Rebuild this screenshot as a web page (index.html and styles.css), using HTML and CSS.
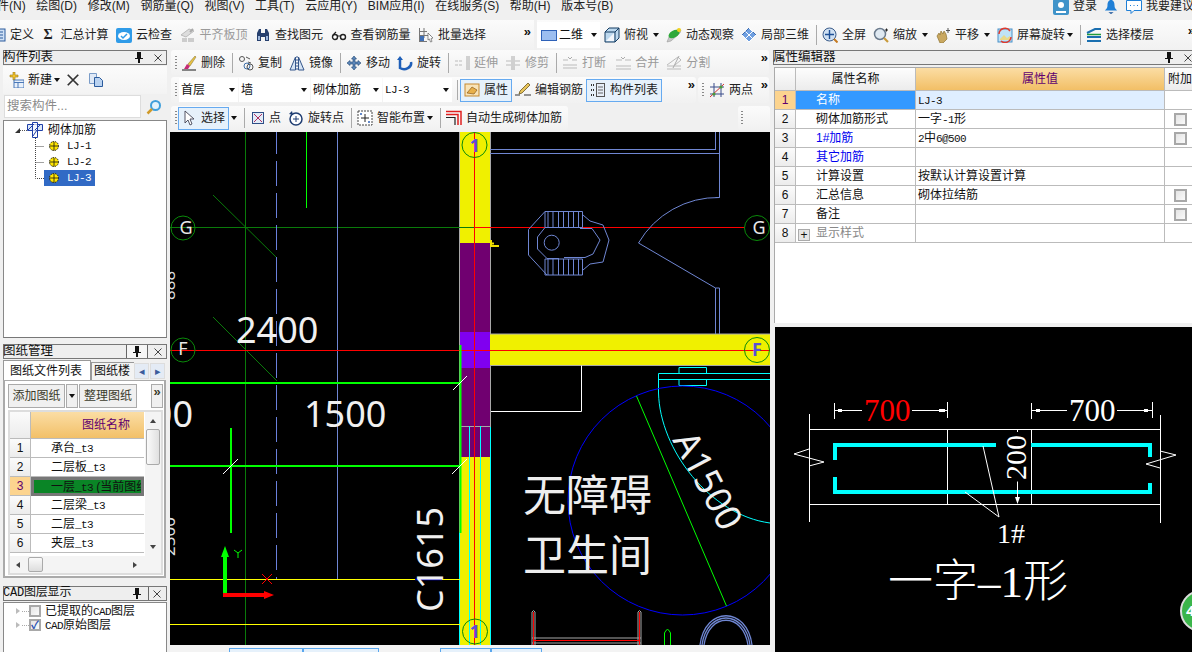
FILE: index.html
```html
<!DOCTYPE html>
<html lang="zh-CN">
<head>
<meta charset="utf-8">
<title>钢筋算量</title>
<link rel="stylesheet" href="styles.css">
</head>
<body>
<svg class="sprite" xmlns="http://www.w3.org/2000/svg">
  <symbol id="i-def" viewBox="0 0 16 16"><rect x="1" y="2" width="14" height="12" fill="#cfe0f5" stroke="#2a5a9c"/><path d="M3 5h10M3 8h10M3 11h10" stroke="#2a5a9c"/></symbol>
  <symbol id="i-cloud" viewBox="0 0 16 16"><rect x="0" y="1" width="16" height="15" rx="2" fill="#2f9be8"/><ellipse cx="8" cy="9" rx="6" ry="4" fill="#fff"/><path d="M5 9l2 2 4-4" fill="none" stroke="#2f9be8" stroke-width="1.5"/></symbol>
  <symbol id="i-align" viewBox="0 0 16 16"><path d="M1 8l8-6 5 2-8 6z" fill="#ddd" stroke="#bbb"/><path d="M2 11h5v4H2zM8 11h6v4H8z" fill="#ccc"/><path d="M10 5l3-3" stroke="#aaa" stroke-width="2"/></symbol>
  <symbol id="i-bino" viewBox="0 0 16 16"><path d="M2 14V6l2-4h2v12zM14 14V6l-2-4h-2v12z" fill="#27406e"/><path d="M6 6h4v4H6z" fill="#27406e"/><path d="M3 9h2v4H3zM11 9h2v4h-2z" fill="#9db7dc"/></symbol>
  <symbol id="i-glass" viewBox="0 0 16 16"><circle cx="4" cy="10" r="2.5" fill="#fff" stroke="#222" stroke-width="1.4"/><circle cx="12" cy="10" r="2.5" fill="#fff" stroke="#222" stroke-width="1.4"/><path d="M6 9h4M2 8l3-3" stroke="#222" stroke-width="1.2" fill="none"/></symbol>
  <symbol id="i-batch" viewBox="0 0 16 16"><path d="M1.500 1v14M6 1v10M1 4.500h8M1 8.500h12M1 14.500h8" stroke="#777" fill="none"/><rect x="2" y="9" width="4" height="5" fill="#3f6fb5"/><path d="M10 6l5 5-2 .5 1 3-1.500.5-1-3-1.500 1z" fill="#fff" stroke="#666" stroke-width=".7"/></symbol>
  <symbol id="i-2d" viewBox="0 0 16 16"><rect x=".5" y="3.500" width="15" height="10" fill="#9cbef0" stroke="#2f62b8"/></symbol>
  <symbol id="i-cube" viewBox="0 0 16 16"><path d="M1 5l4-4h10v10l-4 4H1z" fill="#bcd8ee" stroke="#133a60"/><path d="M1 5h10v10M11 5l4-4" fill="none" stroke="#133a60"/><path d="M2 14l8-8v8z" fill="#fff" opacity=".8"/></symbol>
  <symbol id="i-orbit" viewBox="0 0 16 16"><path d="M1 15l2-5 9-8 3 1-1 3-9 8z" fill="#c8c8c8" stroke="#999" stroke-width=".6"/><ellipse cx="8" cy="7" rx="6" ry="3.500" fill="#2fa83a" transform="rotate(-30 8 7)"/><circle cx="13" cy="3" r="2" fill="#f1d21c"/></symbol>
  <symbol id="i-l3d" viewBox="0 0 16 16"><path d="M1 8l7-7 7 7-7 7z" fill="#6f9fe0" stroke="#3c6cb0"/><path d="M4.500 4.500l7 7M8 1l4 4M1 8l7 7M11.500 4.500l-7 7M15 8l-7 7" stroke="#fff" fill="none"/></symbol>
  <symbol id="i-full" viewBox="0 0 16 16"><circle cx="7.500" cy="7.500" r="6.500" fill="#cfe0f2" stroke="#3b5c8a"/><path d="M7.500 3v9M3 7.500h9" stroke="#1d4f96" stroke-width="1.400"/><path d="M12 12l3.500 3.500" stroke="#c47a22" stroke-width="2"/></symbol>
  <symbol id="i-zoom" viewBox="0 0 16 16"><circle cx="7" cy="7" r="5.500" fill="#dfe9f2" stroke="#6a7a8c" stroke-width="1.500"/><path d="M11 11l4 4" stroke="#c89a3a" stroke-width="2.200"/><path d="M12 3h3M13.500 1.500v3" stroke="#222"/></symbol>
  <symbol id="i-pan" viewBox="0 0 16 16"><path d="M2 9l2-3 1 2 1-4 2 3 1-3 2 3 1 5-4 4H5z" fill="#c9a860" stroke="#8f7434" stroke-width=".7"/><path d="M13 1v5M11 3.500h4" stroke="#555"/></symbol>
  <symbol id="i-srot" viewBox="0 0 16 16"><rect x="1" y="2" width="14" height="13" fill="#bfe3f7" stroke="#4a90c8"/><path d="M3 12l4-4 3 3 3-2v4H3z" fill="#e8d98a"/><path d="M2 7a6 6 0 0 1 11-3M14 10a6 6 0 0 1-10 4" fill="none" stroke="#e03a2e" stroke-width="1.500"/></symbol>
  <symbol id="i-layer" viewBox="0 0 16 16"><path d="M1 6l8-4h6M1 10h14M1 14h14" fill="none" stroke="#1a6fb0" stroke-width="2"/><path d="M1 7.500h14" stroke="#1f9a3a" stroke-width="1.500"/></symbol>
  <symbol id="i-del" viewBox="0 0 16 16"><path d="M1 15h14" stroke="#3a3a3a" stroke-width="1.200"/><path d="M3 14l3-5 3 2-2 3z" fill="#c52a74"/><path d="M7 9l7-8 1 1-6 9z" fill="#e9c243" stroke="#7a6a2c" stroke-width=".5"/></symbol>
  <symbol id="i-copy" viewBox="0 0 16 16"><circle cx="4" cy="4" r="2.500" fill="none" stroke="#555"/><circle cx="9" cy="11" r="3" fill="none" stroke="#3d6fa8"/><circle cx="12" cy="12" r="3" fill="none" stroke="#555"/><path d="M8 2l4 2M10 7l3 1" stroke="#555" fill="none"/></symbol>
  <symbol id="i-mirror" viewBox="0 0 16 16"><path d="M1 15L6.500 2v13zM15 15L9.500 2v13z" fill="#d6e4f4" stroke="#34568c"/><path d="M8 1v14" stroke="#34568c" stroke-dasharray="2 1"/></symbol>
  <symbol id="i-move" viewBox="0 0 16 16"><path d="M8 1l2.500 3H9v3h3V5.500L15 8l-3 2.500V9H9v3h1.500L8 15l-2.500-3H7V9H4v1.500L1 8l3-2.500V7h3V4H5.500z" fill="#5c86b8" stroke="#1f4472" stroke-width=".6"/></symbol>
  <symbol id="i-rot" viewBox="0 0 16 16"><path d="M3 3v10a7 6 0 0 0 11-6" fill="none" stroke="#1f5fb8" stroke-width="2.500"/><path d="M0 5l3-4 3 4z" fill="#1f5fb8"/></symbol>
  <symbol id="i-ext" viewBox="0 0 16 16"><path d="M13 1v14M15 1v14" stroke="#aaa"/><path d="M1 6h3M5 6h3M1 10h3M5 10h3" stroke="#bbb"/></symbol>
  <symbol id="i-trim" viewBox="0 0 16 16"><path d="M7 1v14M9 1v14" stroke="#aaa"/><path d="M1 6h5M1 10h5M10 6h5M10 10h5" stroke="#bbb"/></symbol>
  <symbol id="i-brk" viewBox="0 0 16 16"><path d="M1 5h5M10 5h5M1 13h14M1 10h14" stroke="#bbb"/><path d="M6 2l2 2 2-2" stroke="#aaa" fill="none"/></symbol>
  <symbol id="i-merge" viewBox="0 0 16 16"><path d="M1 5h6M10 5h6M1 11h15M1 14h15" stroke="#bbb"/><path d="M6 2l2 2 2-2" stroke="#aaa" fill="none"/></symbol>
  <symbol id="i-split" viewBox="0 0 16 16"><path d="M1 11h14M1 14h14M1 10L12 2l3 3-6 5" stroke="#bbb" fill="none"/><path d="M13 1l-6 12" stroke="#aaa"/></symbol>
  <symbol id="i-prop" viewBox="0 0 16 16"><rect x="1" y="2" width="14" height="12" fill="#f8e3b8" stroke="#c78a2e"/><path d="M3 11l5-6 5 3-3 4z" fill="#e8b04a" stroke="#8a5a1c" stroke-width=".7"/></symbol>
  <symbol id="i-edit" viewBox="0 0 16 16"><path d="M0 13h5M9 13h7" stroke="#333"/><path d="M4 12l1-3 8-8 2 2-8 8z" fill="#e8c45a" stroke="#6a5520" stroke-width=".8"/></symbol>
  <symbol id="i-list" viewBox="0 0 16 16"><rect x="6.500" y="1.500" width="8" height="13" fill="#e6eef8" stroke="#555"/><path d="M8 5h5M8 8h5M8 11h5" stroke="#666"/><path d="M1 3h3M1 8h3M1 13h3" stroke="#333" stroke-width="2" stroke-dasharray="1 1"/></symbol>
  <symbol id="i-two" viewBox="0 0 16 16"><path d="M5 1v14M12 1v14M1 5h14M1 12h14" stroke="#3a4d8a"/><path d="M1 15L15 2" stroke="#d03030"/><circle cx="12" cy="5" r="1.600" fill="#4a9a3a"/><circle cx="5" cy="12" r="1.600" fill="#4a9a3a"/></symbol>
  <symbol id="i-sel" viewBox="0 0 16 16"><path d="M4 1v12l3-3 2 5 2-1-2-5h4z" fill="#fff" stroke="#445" stroke-width=".9"/></symbol>
  <symbol id="i-pt" viewBox="0 0 16 16"><rect x="2.500" y="2.500" width="11" height="11" fill="#e3ecf8" stroke="#2f4e86"/><path d="M4 4l8 8M12 4l-8 8" stroke="#b03060"/></symbol>
  <symbol id="i-rpt" viewBox="0 0 16 16"><circle cx="8" cy="9" r="6" fill="#fff" stroke="#1f3d72" stroke-width="1.500"/><path d="M8 6v6M5 9h6" stroke="#1f3d72"/><path d="M1 4l3-3 1 4z" fill="#1f3d72"/></symbol>
  <symbol id="i-smart" viewBox="0 0 16 16"><rect x="1" y="1" width="14" height="14" fill="#fff" stroke="#444" stroke-dasharray="2 1"/><path d="M8 4v8M4 8h8" stroke="#222"/><circle cx="4" cy="4" r="1" fill="#2f62b8"/><circle cx="12" cy="12" r="1" fill="#2f62b8"/></symbol>
  <symbol id="i-auto" viewBox="0 0 16 16"><path d="M0 1.500h15V15M0 4.500h12V15" fill="none" stroke="#e02020" stroke-width="1.500"/><path d="M0 7.500h9V15" fill="none" stroke="#222" stroke-width="1.200"/></symbol>
  <symbol id="i-new" viewBox="0 0 16 16"><path d="M5 0h2v3h3v2H7v3H5V5H2V3h3z" fill="#f0c22e" stroke="#9a7a10" stroke-width=".6"/><rect x="6" y="8" width="10" height="8" fill="#e8f0fa" stroke="#4a78b8"/><path d="M6 10.500h10M10 10.500V16" stroke="#4a78b8"/></symbol>
  <symbol id="i-x" viewBox="0 0 16 16"><path d="M2 2l12 12M14 2L2 14" stroke="#333" stroke-width="2"/></symbol>
  <symbol id="i-dup" viewBox="0 0 16 16"><path d="M1.500 1.500h7v10h-7z" fill="#dfe9f6" stroke="#7a9cc8"/><path d="M6.500 5.500h5l3 3v6h-8z" fill="#b9d2f0" stroke="#2a5a9c"/></symbol>
  <symbol id="i-search" viewBox="0 0 16 16"><circle cx="9.500" cy="6.500" r="4.500" fill="#e3f2fb" stroke="#3f9fdb" stroke-width="2"/><path d="M6 10l-4.500 4.500" stroke="#d09a2a" stroke-width="2.500"/></symbol>
  <symbol id="i-root" viewBox="0 0 16 16"><path d="M.5 2.500h15v6h-15z" fill="#dce8f8" stroke="#2140a8"/><path d="M5.500.5h5v15h-5z" fill="#fff" fill-opacity=".7" stroke="#2140a8"/><path d="M1 8l6-6M8 8l6-6M6 14l4-6" stroke="#2140a8"/></symbol>
  <symbol id="i-gear" viewBox="0 0 12 12"><circle cx="6" cy="6" r="4.500" fill="#ffe600" stroke="#111" stroke-dasharray="1.400 1"/><path d="M2 6h8M6 2v8" stroke="#111" stroke-width=".8"/></symbol>
  <symbol id="i-conn" viewBox="0 0 9 16"><path d="M.5 0v8.500H9" fill="none" stroke="#444" stroke-dasharray="1 1"/></symbol>
  <symbol id="i-conn2" viewBox="0 0 9 16"><path d="M.5 0v16M.5 8.500H9" fill="none" stroke="#444" stroke-dasharray="1 1"/></symbol>
  <symbol id="i-user" viewBox="0 0 16 16"><rect width="16" height="16" rx="2" fill="#3f93c9"/><circle cx="8" cy="6" r="3" fill="#fff"/><path d="M3 14v-2h10v2z" fill="#fff"/></symbol>
  <symbol id="i-bell" viewBox="0 0 16 16"><path d="M8 0c3 0 4 3 4 6s1 4 3 6H1c2-2 3-3 3-6s1-6 4-6z" fill="#1f7fd6"/><path d="M5 14h6l-3 2z" fill="#134e96"/></symbol>
  <symbol id="i-cmt" viewBox="0 0 16 16"><path d="M.5 1.500h15v10H8l-3 3v-3H.5z" fill="#fff" stroke="#1f7fd6"/><path d="M4 6.500h1M7.500 6.500h1M11 6.500h1" stroke="#1f7fd6"/></symbol>
  <symbol id="i-pin" viewBox="0 0 10 11"><path d="M3 0h4v6h2v1H6v4H4V7H1V6h2zM5 1v5" fill="#111"/></symbol>
  <symbol id="i-cl" viewBox="0 0 10 10"><path d="M1.500 1.500l7 7M8.500 1.500l-7 7" stroke="#444"/></symbol>
</svg>

<header class="menubar">
  <span class="menu first">件(N)</span><span class="menu">绘图(D)</span><span class="menu">修改(M)</span><span class="menu">钢筋量(Q)</span><span class="menu">视图(V)</span><span class="menu">工具(T)</span><span class="menu">云应用(Y)</span><span class="menu">BIM应用(I)</span><span class="menu">在线服务(S)</span><span class="menu">帮助(H)</span><span class="menu">版本号(B)</span>
  <div class="account">
    <svg class="ic"><use href="#i-user"/></svg><span class="acc-t">登录</span>
    <svg class="ic bell"><use href="#i-bell"/></svg>
    <svg class="ic cmt"><use href="#i-cmt"/></svg><span class="acc-t">我要建议</span>
  </div>
</header>

<div class="topbar">
  <div class="band band-l">
    <span class="tool"><span class="cut"><svg class="ic"><use href="#i-def"/></svg></span>定义</span>
    <span class="tool sig"><b class="sigma">Σ</b>汇总计算</span>
    <span class="tool"><svg class="ic"><use href="#i-cloud"/></svg>云检查</span>
    <span class="tool off"><svg class="ic"><use href="#i-align"/></svg>平齐板顶</span>
    <span class="tool"><svg class="ic"><use href="#i-bino"/></svg>查找图元</span>
    <span class="tool"><svg class="ic"><use href="#i-glass"/></svg>查看钢筋量</span>
    <span class="tool"><svg class="ic"><use href="#i-batch"/></svg>批量选择</span>
    <span class="more more-l">»</span>
  </div>
  <div class="band band-r">
    <span class="combo2d"><svg class="ic"><use href="#i-2d"/></svg>二维<i class="arrow a2d"></i></span>
    <span class="tool"><svg class="ic"><use href="#i-cube"/></svg>俯视<i class="arrow"></i></span>
    <span class="tool"><svg class="ic"><use href="#i-orbit"/></svg>动态观察</span>
    <span class="tool"><svg class="ic"><use href="#i-l3d"/></svg>局部三维</span>
    <i class="sep"></i>
    <span class="tool"><svg class="ic"><use href="#i-full"/></svg>全屏</span>
    <span class="tool"><svg class="ic"><use href="#i-zoom"/></svg>缩放<i class="arrow"></i></span>
    <span class="tool"><svg class="ic"><use href="#i-pan"/></svg>平移<i class="arrow"></i></span>
    <span class="tool"><svg class="ic"><use href="#i-srot"/></svg>屏幕旋转<i class="arrow near"></i></span>
    <i class="sep"></i>
    <span class="tool"><svg class="ic"><use href="#i-layer"/></svg>选择楼层</span>
    <span class="more more-r">»</span>
  </div>
</div>

<main class="main">
  <aside class="left">
    <section class="panel p-list">
      <div class="title"><span class="title-t">构件列表</span><svg class="pin"><use href="#i-pin"/></svg><svg class="cl"><use href="#i-cl"/></svg></div>
      <div class="list-tools">
        <svg class="ic"><use href="#i-new"/></svg><span class="newt">新建</span><i class="arrow"></i>
        <svg class="ic x"><use href="#i-x"/></svg><svg class="ic dup"><use href="#i-dup"/></svg>
      </div>
      <div class="search-row"><div class="search">搜索构件...</div><svg class="ic sicon"><use href="#i-search"/></svg></div>
      <div class="tree">
        <div class="troot"><i class="tri"></i><i class="dots"></i><svg class="ic"><use href="#i-root"/></svg><span class="rt">砌体加筋</span></div>
        <div class="leaf"><svg class="conn"><use href="#i-conn2"/></svg><span class="lf"><svg class="gear"><use href="#i-gear"/></svg><span class="m">LJ-1</span></span></div>
        <div class="leaf"><svg class="conn"><use href="#i-conn2"/></svg><span class="lf"><svg class="gear"><use href="#i-gear"/></svg><span class="m">LJ-2</span></span></div>
        <div class="leaf"><svg class="conn"><use href="#i-conn"/></svg><span class="lf on"><svg class="gear"><use href="#i-gear"/></svg><span class="m">LJ-3</span></span></div>
      </div>
    </section>

    <section class="panel p-draw">
      <div class="title"><span class="title-t">图纸管理</span><span class="pinbox"><svg class="pin"><use href="#i-pin"/></svg></span><svg class="cl"><use href="#i-cl"/></svg></div>
      <div class="tabs"><span class="tab act">图纸文件列表</span><span class="tab">图纸楼</span><span class="nav">◂</span><span class="nav">▸</span></div>
      <div class="tabbody">
        <div class="btns"><span class="btn b1">添加图纸</span><span class="btn b2"><i class="arrow"></i></span><span class="btn b3">整理图纸</span><span class="btn b4">»</span></div>
        <div class="grid">
          <div class="gcols">
            <div class="gdata">
              <div class="grow ghead"><span class="gn"></span><span class="gc hd">图纸名称</span></div>
              <div class="grow"><span class="gn">1</span><span class="gc">承台<span class="m">_t3</span></span></div>
              <div class="grow"><span class="gn">2</span><span class="gc">二层板<span class="m">_t3</span></span></div>
              <div class="grow"><span class="gn cur">3</span><span class="gc sel">一层<span class="m">_t3</span> (当前图纸)</span></div>
              <div class="grow"><span class="gn">4</span><span class="gc">二层梁<span class="m">_t3</span></span></div>
              <div class="grow"><span class="gn">5</span><span class="gc">二层<span class="m">_t3</span></span></div>
              <div class="grow"><span class="gn">6</span><span class="gc">夹层<span class="m">_t3</span></span></div>
            </div>
            <div class="vscroll"><i class="up"></i><i class="thumb"></i><i class="down"></i></div>
          </div>
          <div class="hscroll"><i class="lt"></i><i class="hthumb"></i><i class="rt-a"></i></div>
        </div>
      </div>
    </section>

    <section class="panel p-cad">
      <div class="title"><span class="title-t cadt">CAD图层显示</span><svg class="pin"><use href="#i-pin"/></svg><span class="clbox"><svg class="cl"><use href="#i-cl"/></svg></span></div>
      <div class="ctree">
        <div class="crow"><i class="ctri"></i><i class="cdots"></i><i class="chk"></i><span>已提取的<span class="m">CAD</span>图层</span></div>
        <div class="crow"><i class="ctri"></i><i class="cdots"></i><i class="chk yes">✓</i><span><span class="m">CAD</span>原始图层</span></div>
      </div>
    </section>
  </aside>

  <section class="center">
    <div class="cbar r-a">
      <i class="grip"></i>
      <span class="tool"><svg class="ic"><use href="#i-del"/></svg>删除</span>
      <i class="sep"></i>
      <span class="tool"><svg class="ic"><use href="#i-copy"/></svg>复制</span>
      <span class="tool"><svg class="ic"><use href="#i-mirror"/></svg>镜像</span>
      <i class="sep"></i>
      <span class="tool"><svg class="ic"><use href="#i-move"/></svg>移动</span>
      <span class="tool"><svg class="ic"><use href="#i-rot"/></svg>旋转</span>
      <i class="sep"></i>
      <span class="tool off"><svg class="ic"><use href="#i-ext"/></svg>延伸</span>
      <span class="tool off"><svg class="ic"><use href="#i-trim"/></svg>修剪</span>
      <i class="sep"></i>
      <span class="tool off"><svg class="ic"><use href="#i-brk"/></svg>打断</span>
      <span class="tool off t-gap"><svg class="ic"><use href="#i-merge"/></svg>合并</span>
      <span class="tool off"><svg class="ic"><use href="#i-split"/></svg>分割</span>
      <span class="more end">»</span>
    </div>
    <div class="r-b">
      <div class="cbar bb-1">
        <i class="grip"></i>
        <span class="sel-box w60">首层<i class="arrow push"></i></span>
        <span class="sel-box w72">墙<i class="arrow push"></i></span>
        <span class="sel-box w71">砌体加筋<i class="arrow push"></i></span>
        <span class="sel-box w69"><span class="m">LJ-3</span><i class="arrow push"></i></span>
        <i class="sep s2"></i>
        <span class="tool hot h-prop"><svg class="ic"><use href="#i-prop"/></svg>属性</span>
        <span class="tool"><svg class="ic"><use href="#i-edit"/></svg>编辑钢筋</span>
        <span class="tool hot h-list"><svg class="ic"><use href="#i-list"/></svg>构件列表</span>
        <span class="more end">»</span>
      </div>
      <div class="cbar bb-2">
        <i class="grip"></i>
        <span class="tool"><svg class="ic"><use href="#i-two"/></svg>两点</span>
        <span class="more end">»</span>
      </div>
    </div>
    <div class="r-c">
      <div class="cbar cc-1">
        <i class="grip"></i>
        <span class="tool hot h-sel"><svg class="ic"><use href="#i-sel"/></svg>选择</span><i class="arrow a-sel"></i>
        <i class="sep"></i>
        <span class="tool t-pt"><svg class="ic"><use href="#i-pt"/></svg>点</span>
        <span class="tool"><svg class="ic"><use href="#i-rpt"/></svg>旋转点</span>
        <i class="sep"></i>
        <span class="tool"><svg class="ic"><use href="#i-smart"/></svg>智能布置<i class="arrow near"></i></span>
        <i class="sep"></i>
        <span class="tool"><svg class="ic"><use href="#i-auto"/></svg>自动生成砌体加筋</span>
      </div>
      <div class="cbar cc-2"><i class="grip"></i></div>
    </div>

    <svg class="cad" viewBox="170 132 600 513" xmlns="http://www.w3.org/2000/svg">
      <rect x="170" y="132" width="600" height="513" fill="#000"/>
      <!-- walls -->
      <rect x="459.500" y="132" width="31" height="111" fill="#f0f000"/>
      <rect x="459.500" y="243" width="31" height="89" fill="#700070"/>
      <rect x="459.500" y="332" width="31" height="36" fill="#8000f0"/>
      <rect x="459.500" y="368" width="31" height="89" fill="#700070"/>
      <rect x="459.500" y="457" width="31" height="188" fill="#f0f000"/>
      <rect x="490" y="334" width="280" height="31.500" fill="#f0f000"/>
      <path class="gy" d="M459.500 132V532M490.500 132V334M490.500 365.500V427M490 334H770M490 365.500H770M460 426.500H490"/>
      <path class="cy" d="M459.500 532V645M469.500 426V645M480.500 426V645M490.500 427V645"/>
      <!-- axes -->
      <path class="dg" d="M245.500 132V645M170 227.500H474M213 195L277 258M213 317L277 381"/>
      <path class="dash" d="M276.500 132V579"/>
      <path class="lb" d="M337.500 132V579"/>
      <path class="g1" d="M306.500 132V208"/>
      <path class="rd" d="M474.500 132V645M170 350.500H770M474 227.500H745"/>
      <path class="g2" d="M170 383H460M170 466H460M231 428V533M460.500 345V533"/>
      <path class="yl" d="M170 579.500H460M170 624.500H460"/>
      <path class="wh" d="M223 474L238 459M452 474L467 459M453 390L467 376M581.500 365.500V411.500H491"/>
      <path class="db" d="M415 579.500H442"/>
      <circle class="ring" cx="183" cy="228" r="12"/><circle class="ring" cx="183" cy="350" r="12"/>
      <circle class="ring" cx="474.500" cy="145" r="12.500"/><circle class="ring" cx="475" cy="631.500" r="12.500"/>
      <circle class="ring" cx="757" cy="228" r="12.500"/><circle class="ring" cx="757" cy="350" r="12.500"/>
      <text class="axis" x="186" y="234">G</text><text class="axis" x="183" y="355">F</text><text class="axis" x="759" y="234">G</text>
      <text class="axis bl" x="757" y="356">F</text><text class="axis bl" x="475" y="152">1</text><text class="axis bl" x="475" y="638">1</text>
      <path class="ylw" d="M491 240v6h8M491 243.500h3"/>
      <!-- plan details -->
      <path class="lb" d="M490 149.500H716M490 153.500H719M715.500 132V149.500M719.500 132V197.500H715.500M719.500 197.500A92 92 0 0 0 638.500 243L715.500 288H719.500V334M715.500 288V334"/>
      <path class="lb" d="M545 211.500H582.500V227.500H545ZM545 259H582.500V275H545Z"/>
      <path class="lb" d="M548 212V227M553 212V227M558.500 212V227M563.500 212V227M568.500 212V227M573.500 212V227M578.500 212V227M548 259V275M553 259V275M558.500 259V275M563.500 259V275M568.500 259V275M573.500 259V275M578.500 259V275"/>
      <path class="lb" d="M545 211.500L528.500 229.500V255L547 275M583 215L590 221 603 225 609 240 603 262 590 264 583 270"/>
      <path class="lb" d="M559 227.500H545L537.500 237V249L547 258.500H559M580 228.500H592L600 240 593 254 585 257.500H564"/>
      <circle class="lb" cx="551.700" cy="242.700" r="7.500"/>
      <path class="cy" d="M658.500 393V373.500H770M658.500 379.500H770M679 373.500V367.500H706.500V373.500M679 379.500V385.500H706.500V379.500"/>
      <path class="cy" d="M658.500 393C660 450 710 515 770 523"/>
      <circle class="bc" cx="682.500" cy="500.500" r="114.500"/>
      <path class="g1" d="M636.500 396L726.500 606"/>
      <!-- texts -->
      <text class="big" x="236" y="343">2400</text>
      <text class="big" x="304" y="427">1500</text>
      <text class="big" x="193" y="427" text-anchor="end">3000</text>
      <text class="big rot" transform="translate(443 612) rotate(-90)">C1615</text>
      <text class="big" transform="translate(672 440) rotate(62)">A1500</text>
      <text class="cn" x="523" y="511">无障碍</text>
      <text class="cn" x="523" y="571">卫生间</text>
      <text class="sm" transform="translate(175 300) rotate(-90)">888</text>
      <text class="sm" transform="translate(175 556) rotate(-90)">2500</text>
      <!-- ucs -->
      <path class="ucsg" d="M225 597V556"/><path class="fg" d="M225 546l4 11h-8z"/>
      <path class="ucsr" d="M223 595H266"/><path class="fr" d="M274 595l-10-4v8z"/>
      <path class="g1" d="M234 550l4 3 4-3M238 553v5"/><path class="rd" d="M262 574l10 10M272 574l-10 10"/>
      <!-- lower fixtures -->
      <path class="gy" d="M532 645V612q1.500-3 3 0V645M638 645V612q1.500-3 3 0V645M532 638H641M532 643H641"/>
      <path class="rd" d="M533.500 612V645M639.500 612V645M533 640.500H640"/>
      <path class="g1" d="M664.500 645V633q3-7 6 0V645"/>
      <path class="lbt" d="M700 645C705 606 747 606 752 645M702 645C707 609 745 609 750 645M704 645C709 612 743 612 748 645"/>
    </svg>

    <div class="statusbits">
      <span class="bit b-a"></span><span class="bit b-b"></span><span class="band2"><span class="bit b-c"></span><span class="bit b-d"></span></span>
    </div>
  </section>

  <aside class="right">
    <div class="title r-title"><span class="title-t">属性编辑器</span><svg class="pin"><use href="#i-pin"/></svg><svg class="cl"><use href="#i-cl"/></svg></div>
    <div class="props">
      <table class="ptable">
        <colgroup><col class="c0"><col class="c1"><col class="c2"><col class="c3"></colgroup>
        <tr class="phead"><th></th><th>属性名称</th><th class="gold">属性值</th><th class="addh">附加</th></tr>
        <tr class="sel1"><td class="n cur">1</td><td class="k kon">名称</td><td class="v von"><span class="m">LJ-3</span></td><td></td></tr>
        <tr><td class="n">2</td><td class="k">砌体加筋形式</td><td class="v">一字<span class="m">-1</span>形</td><td class="c"><i class="chk"></i></td></tr>
        <tr><td class="n">3</td><td class="k blue">1#加筋</td><td class="v"><span class="m">2</span>中<span class="m">6@500</span></td><td class="c"><i class="chk"></i></td></tr>
        <tr><td class="n">4</td><td class="k blue">其它加筋</td><td class="v"></td><td></td></tr>
        <tr><td class="n">5</td><td class="k">计算设置</td><td class="v">按默认计算设置计算</td><td></td></tr>
        <tr><td class="n">6</td><td class="k">汇总信息</td><td class="v">砌体拉结筋</td><td class="c"><i class="chk"></i></td></tr>
        <tr><td class="n">7</td><td class="k">备注</td><td class="v"></td><td class="c"><i class="chk"></i></td></tr>
        <tr><td class="n">8</td><td class="k grey"><i class="plus">+</i>显示样式</td><td class="v"></td><td></td></tr>
      </table>
    </div>
    <svg class="detail" viewBox="775 327 417 325" xmlns="http://www.w3.org/2000/svg">
      <rect x="775" y="327" width="417" height="325" fill="#000"/>
      <path class="wl" d="M834.500 403V419M947.500 402V418M1031.500 403V419M1152.500 402V418M834 410.500H862M912 410.500H947M1032 410.500H1067M1117 410.500H1153"/>
      <path class="wf" d="M838 409h4v3h-4zM939 409h6v3h-6zM1036 409h4v3h-4zM1144 409h4v3h-4z"/>
      <path class="wl" d="M809.500 414V522M1160.500 415V523M809 429.500H1160M809 504.500H1160M947.500 429V504M1031.500 429V504"/>
      <path class="wl" d="M809 449L794 454 824 462 809 466M1160 451L1176 455 1146 464 1160 468"/>
      <path class="rebar" d="M837 445H996M1031 445H1148M835 460V443M835 477V494M835 492H1152M1150 443V457M1150 483V492"/>
      <path class="wl" d="M983 446L999 517 965 492M1017.500 481.500V497M1017.500 430V432"/>
      <path class="wf" d="M1015 497h5l-2.500 7z"/>
      <text class="ser red" x="864" y="421">700</text>
      <text class="ser" x="1069" y="421">700</text>
      <text class="ser s30" transform="translate(1026 480) rotate(-90)">200</text>
      <text class="ser s28" x="997" y="543">1#</text>
      <text class="title-cad" x="888" y="597">一字–1形</text>
      <circle cx="1201" cy="611" r="20" fill="#3bb54a" stroke="#dcdcdc" stroke-width="2"/>
      <text class="badge" x="1186" y="616">4</text>
    </svg>
  </aside>
</main>
</body>
</html>
```

FILE: styles.css
```css
* { box-sizing: border-box; }
html, body { margin: 0; padding: 0; }
body {
  width: 1192px; height: 652px; overflow: hidden;
  background: #f0f0f0; color: #111;
  font: 12px/16px "Liberation Sans", "Noto Sans CJK SC", sans-serif;
}
i { font-style: normal; }
svg { display: block; flex: none; }
.sprite { display: none; }
.ic { width: 16px; height: 16px; }
.m { font-family: "Liberation Mono", "Noto Sans CJK SC", monospace; font-size: 11px; letter-spacing: -.6px; line-height: 10px; }

/* menu */
.menubar { height: 20px; padding-bottom: 7px; display: flex; align-items: center; gap: 10.7px; color: #222; line-height: 13px; }
.menu { white-space: nowrap; }
.menu.first { margin-left: -3px; }
.account { margin-left: auto; display: flex; align-items: center; white-space: nowrap; margin-right: -2px; }
.acc-t { margin-left: 4px; }
.bell { margin-left: 7px; width: 14px; }
.cmt { margin-left: 8px; }

/* top toolbar */
.topbar { height: 30px; display: flex; }
.band { height: 30px; display: flex; align-items: center; background: linear-gradient(#fbfbfb, #f1f1f1); }
.band-l { width: 534px; gap: 7.500px; }
.band-r { margin-left: 3px; flex: 1; gap: 7px; padding-left: 0; }
.tool { display: inline-flex; align-items: center; gap: 4px; white-space: nowrap; color: #222; }
.tool.off { color: #9a9a9a; }
.cut { width: 6px; overflow: hidden; display: flex; justify-content: flex-end; margin-right: 0; }
.sigma { font: bold 14px "Liberation Serif", serif; width: 10px; margin: 0 3px 0 2px; }
.more { font: bold 13px/12px "Liberation Sans", sans-serif; color: #111; }
.more-l { margin-left: auto; margin-right: 3px; margin-top: -7px; }
.more-r { margin-left: auto; margin-right: -3px; margin-top: -9px; }
.combo2d { width: 63px; height: 26px; background: #fff; display: flex; align-items: center; gap: 2px; padding-left: 4px; margin-right: -3px; }
.arrow { display: inline-block; width: 0; height: 0; border: 3.500px solid transparent; border-top: 4px solid #111; border-bottom: 0; margin-left: 5px; flex: none; }
.tool .arrow { margin-left: 1px; }
.tool .arrow.near { margin-left: -2px; }
.a2d { margin-left: 6px; }
.sep { width: 1px; height: 20px; background: #aaa; flex: none; margin-right: -2px; }

/* main layout */
.main { display: flex; height: 602px; }
.left { width: 170px; display: flex; flex-direction: column; }
.center { width: 601px; display: flex; flex-direction: column; }
.right { width: 421px; display: flex; flex-direction: column; padding-left: 2px; }

.title { height: 15px; border: 1px solid #777; display: flex; align-items: center; background: #eee; font-size: 12.500px; }
.panel > .title { margin: 0 3px; }
.title-t { flex: 1; white-space: nowrap; line-height: 13px; margin-left: -1px; }
.pin { width: 10px; height: 11px; }
.cl { width: 10px; height: 10px; margin: 0 3px 0 9px; }

/* component list */
.p-list { height: 288px; display: flex; flex-direction: column; }
.list-tools { height: 28px; margin: 1px 3px 0; padding-left: 5px; display: flex; align-items: center; background: linear-gradient(#fbfbfb, #f3f3f3); }
.newt { margin-left: 4px; }
.list-tools .arrow { margin-left: 2px; }
.x { margin-left: 6px; width: 14px; }
.dup { margin-left: 8px; }
.search-row { display: flex; align-items: center; margin: 0 4px; height: 25px; }
.search { width: 137px; height: 23px; background: #fff; border: 1px solid #ddd; color: #8a8a8a; font-size: 12.500px; line-height: 21px; padding-left: 2px; white-space: nowrap; }
.sicon { margin-left: 5px; }
.tree { flex: 1; margin: 1px 3px 0; background: #fff; border: 1px solid #888; border-bottom-color: #777; padding-top: 1px; }
.troot { height: 16px; display: flex; align-items: center; padding-left: 11px; }
.tri { width: 0; height: 0; border-bottom: 5px solid #333; border-left: 5px solid transparent; }
.dots { width: 7px; border-top: 1px dotted #555; }
.rt { margin-left: 5px; font-size: 12px; }
.leaf { height: 16px; display: flex; margin-left: 31px; }
.conn { width: 9px; height: 16px; }
.lf { display: flex; align-items: center; gap: 7px; padding-left: 4px; width: 51px; }
.lf.on { background: #316ac5; }
.gear { width: 12px; height: 12px; }
.lf.on .m { color: #fff; }

/* drawings */
.p-draw { height: 234px; margin-top: 6px; display: flex; flex-direction: column; }
.pinbox { border-left: 1px solid #666; border-right: 1px solid #666; height: 13px; width: 22px; display: flex; justify-content: center; align-items: center; background: #f5f5f5; }
.p-draw .cl { margin-left: 5px; }
.tabs { height: 20px; margin: 1px 3px 0; display: flex; align-items: flex-end; }
.tab { height: 20px; padding: 2px 3px 0 7px; border: 1px solid #999; border-bottom: 0; line-height: 16px; overflow: hidden; white-space: nowrap; }
.tab.act { width: 88px; height: 21px; background: #fff; margin-bottom: -1px; padding-left: 6px; }
.tab:not(.act) { width: 43px; padding-left: 2px; height: 18px; padding-top: 0; background: #f3f3f3; border-right: 0; }
.nav { width: 15px; height: 16px; margin: 0 1px 1px 0; border: 1px solid #ddd; background: #e4ebf5; color: #3c5c9c; font-size: 11px; line-height: 14px; text-align: center; }
.tabbody { height: 198px; margin: 0 4px 0 3px; border: 2px solid #aaa; border-top-width: 1px; background: #fff; padding: 3px 3px 0; }
.btns { display: flex; height: 24px; }
.btn { height: 24px; border: 1px solid #aaa; background: #f0f0f0; display: flex; align-items: center; justify-content: center; white-space: nowrap; color: #3a3a2a; }
.b1 { width: 57px; margin-right: 1px; }
.b2 { width: 12px; }
.b2 .arrow { margin: 0; }
.b3 { width: 58px; margin-left: 1px; }
.b4 { width: 12px; margin-left: auto; margin-right: -2px; font-weight: bold; align-items: flex-start; font-size: 13px; line-height: 14px; }
.grid { margin-top: 2px; height: 165px; border: 2px solid #ddd; margin-right: -2px; background: #fff; overflow: hidden; }
.gcols { display: flex; height: 144px; }
.gdata { width: 134px; overflow: hidden; }
.grow { display: flex; height: 19px; }
.ghead { height: 27px; }
.gn { width: 21px; flex: none; background: linear-gradient(#fbfbfb, #ececec); border-right: 1px solid #bbb; border-bottom: 1px solid #bbb; text-align: center; line-height: 18px; }
.gn.cur { background: #fcd48f; color: #600070; }
.gc { flex: 1; border-bottom: 1px solid #bbb; line-height: 18px; padding-left: 20px; white-space: nowrap; overflow: hidden; }
.gc.hd { background: linear-gradient(#fbdda4, #f2c068); color: #600070; line-height: 26px; padding-left: 51px; }
.gc.sel { background: #0a8526; border: 3px solid #777; line-height: 14px; padding-left: 17px; }
.vscroll { flex: 1; display: flex; flex-direction: column; align-items: center; background: #f4f4f4; border-left: 1px solid #fff; }
.up, .down { width: 0; height: 0; border: 3px solid transparent; }
.up { border-bottom: 4px solid #444; margin-top: 7px; border-top: 0; }
.down { border-top: 4px solid #444; border-bottom: 0; margin-top: 80px; }
.thumb { width: 14px; height: 36px; margin-top: 6px; border: 1px solid #aaa; border-radius: 2px; background: linear-gradient(90deg, #fafafa, #e0e0e0); }
.hscroll { height: 17px; display: flex; align-items: center; background: #f4f4f4; padding-left: 6px; }
.lt, .rt-a { width: 0; height: 0; border: 3px solid transparent; }
.lt { border-right: 4px solid #444; border-left: 0; }
.rt-a { border-left: 4px solid #444; border-right: 0; margin-left: 90px; }
.hthumb { width: 15px; height: 15px; margin-left: 8px; border: 1px solid #aaa; border-radius: 2px; background: linear-gradient(#fafafa, #ddd); }

/* cad layers */
.p-cad { margin-top: 8px; flex: 1; display: flex; flex-direction: column; }
.cadt { font-family: "Liberation Mono", "Noto Sans CJK SC", monospace; font-size: 12px; letter-spacing: -.2px; }
.clbox { width: 18px; height: 13px; display: flex; align-items: center; border-left: 1px solid #666; margin-left: 6px; }
.clbox .cl { margin: 0 3px; }
.ctree { flex: 1; margin: 1px 3px 0; background: #fff; border: 1px solid #888; border-bottom: 0; padding-top: 1px; padding-left: 12px; }
.crow { display: flex; align-items: center; height: 14px; margin-top: 0; white-space: nowrap; }
.ctri { width: 0; height: 0; border: 3.500px solid transparent; border-left: 4px solid #bbb; border-right: 0; }
.cdots { width: 7px; margin-left: 2px; border-top: 1px dotted #aaa; }
.chk { display: block; width: 13px; height: 13px; border: 2px solid #a8a8a8; background: linear-gradient(135deg, #e4e4e4, #fafafa); color: #2a4fb0; font-size: 11px; line-height: 9px; font-weight: bold; text-align: center; }
.crow .chk { width: 12px; height: 12px; margin: 0 4px 0 0; }

/* center toolbars */
.cbar { display: flex; align-items: center; background: linear-gradient(#fbfbfb, #f1f1f1); border-radius: 3px; }
.cbar .tool { flex: none; }
.r-a { height: 25px; margin-left: 1px; gap: 7px; width: 598px; padding-left: 4px; }
.grip { width: 2px; height: 14px; flex: none; background-image: linear-gradient(#888 50%, transparent 50%); background-size: 2px 3px; }
.r-a .grip, .cc-1 .grip { margin-right: -3px; }
.bb-2 .grip { margin-right: -1px; }
.t-gap { margin-left: 2px; }
.more.end { margin-left: auto; margin-right: 1px; margin-top: -10px; }
.r-b { height: 26px; margin-top: 2px; display: flex; }
.bb-1 { width: 525px; margin-left: 1px; padding-left: 4px; }
.bb-2 { width: 71px; margin-left: 2px; padding-left: 4px; gap: 6px; }
.sel-box { height: 24px; background: #fff; display: flex; align-items: center; padding-left: 2px; margin-right: 1px; white-space: nowrap; }
.push { margin-left: auto; margin-right: 3px; }
.w60 { width: 59px; margin-left: 2px; }
.w72 { width: 71px; }
.w71 { width: 71px; }
.w69 { width: 69px; }
.sep.s2 { margin: 0 2px 0 4px; }
.hot { height: 23px; border: 1px solid #66aaf0; background: #e6f1fb; padding: 0 3px; }
.bb-1 .tool + .tool { margin-left: 3px; }
.r-c { height: 24px; margin-top: 3px; display: flex; }
.cc-1 { width: 397px; margin-left: 1px; padding-left: 4px; gap: 7px; }
.cc-2 { width: 32px; margin-left: auto; margin-right: 1px; padding-left: 3px; }
.h-sel { margin-left: -3px; padding-left: 2px; margin-right: -5px; }
.a-sel { margin-left: 0; }
.t-pt { gap: 3px; }
.cad { width: 600px; height: 513px; margin-top: 2px; }
.statusbits { height: 7px; display: flex; padding-top: 3px; overflow: hidden; background: #f3f3f3; }
.bit { height: 8px; border: 1px solid #5aa7ee; background: #e6f1fb; flex: none; }
.b-a { width: 74px; margin-left: 59px; }
.b-b { width: 76px; }
.band2 { display: flex; margin-left: 61px; }
.b-c, .b-d { width: 51px; }

/* cad strokes */
.cad path, .cad circle { fill: none; }
.cad .fg { fill: #0f0; }
.cad .fr { fill: #f00; }
.gy { stroke: #a8a8a8; }
.cy { stroke: #0ff; }
.dg { stroke: #0a7a0a; }
.dash { stroke: #6a80dc; stroke-dasharray: 25 7; stroke-dashoffset: 3; }
.lb { stroke: #6f86d2; }
.g1 { stroke: #0f0; }
.g2 { stroke: #0f0; stroke-width: 2; }
.rd { stroke: #f00; }
.yl { stroke: #ff0; }
.wh { stroke: #fff; }
.db { stroke: #0000d0; stroke-width: 1.500; }
.ring { stroke: #0a8a0a; }
.ylw { stroke: #f0e000; stroke-width: 2; }
.bc { stroke: #00f; }
.ucsg { stroke: #0f0; stroke-width: 4; }
.ucsr { stroke: #f00; stroke-width: 4; }
.lbt { stroke: #6f86d2; stroke-width: 1.300; }
.axis { font: 18px "Noto Sans", sans-serif; fill: #e8e8e8; text-anchor: middle; }
.axis.bl { fill: #5a50d8; font-weight: bold; }
.big { font: 36px "Noto Sans", sans-serif; fill: #f0f0f0; }
.cn { font: 43px "Noto Sans CJK SC", sans-serif; fill: #eee; }
.sm { font: 17px "Noto Sans", sans-serif; fill: #ddd; }

/* properties */
.r-title { margin-left: 0; border-right: 0; width: 419px; }
.r-title .cl { margin-right: -1px; }
.props { height: 256px; margin-top: 2px; margin-left: 1px; background: #fff; border-left: 1px solid #aaa; border-top: 1px solid #aaa; overflow: hidden; }
.ptable { table-layout: fixed; border-collapse: separate; border-spacing: 0; width: 417px; }
.c0 { width: 21px; } .c1 { width: 120px; } .c2 { width: 249px; } .c3 { width: 27px; }
.ptable th, .ptable td { border-right: 1px solid #bbb; border-bottom: 1px solid #bbb; padding: 0; font-weight: normal; white-space: nowrap; overflow: hidden; }
.ptable td { height: 19px; line-height: 18px; }
.phead th { height: 23px; background: linear-gradient(#fdfdfd, #ececec); }
.phead .gold { background: linear-gradient(#fbdda4, #f2bf66); color: #600070; }
.addh { text-align: left; padding-left: 3px !important; border-right: 0 !important; }
.ptable td:last-child { border-right: 0; }
.n { text-align: center; background: linear-gradient(#fbfbfb, #ececec); }
.n.cur { background: #fcd48f; color: #600070; }
.k { padding-left: 20px !important; }
.kon { background: #3399ff; color: #fff; }
.v { padding-left: 2px !important; }
.von { background: #dfeeff; }
.blue { color: #0000f0; }
.grey { color: #888; padding-left: 2px !important; }
.plus { display: inline-block; width: 12px; height: 12px; margin-right: 6px; border: 1px solid #aaa; background: #e6e6e6; color: #111; line-height: 10px; text-align: center; font-size: 12px; vertical-align: -2px; }
.ptable td.c { padding-left: 9px; line-height: 0; }
.detail { width: 417px; height: 325px; margin-top: 4px; margin-left: 2px; }
.wl { stroke: #fff; fill: none; }
.wf { fill: #fff; }
.rebar { stroke: #0ff; stroke-width: 4; fill: none; }
.ser { font: 31px "Liberation Serif", serif; fill: #fff; }
.ser.red { fill: #f00; }
.s30 { font-size: 30px; }
.s28 { font-size: 28px; }
.title-cad { font: 300 45px "Liberation Serif", "Noto Sans CJK SC", serif; fill: #fff; }
.badge { font: bold 15px "Noto Sans", sans-serif; fill: #fff; }
```
